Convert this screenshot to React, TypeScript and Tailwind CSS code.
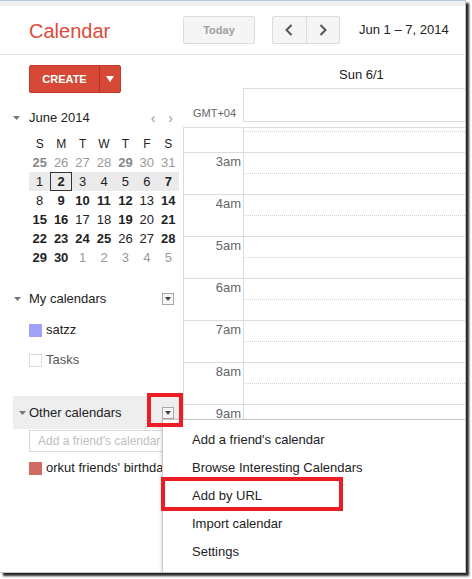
import React from "react";

type Day = { n: number; bold?: boolean; muted?: boolean; today?: boolean };

const weeks: Day[][] = [
  [25, 26, 27, 28, 29, 30, 31].map((n) => ({ n, muted: true, bold: n === 25 || n === 29 })),
  [1, 2, 3, 4, 5, 6, 7].map((n) => ({ n, bold: n === 2 || n === 7, today: n === 2 })),
  [8, 9, 10, 11, 12, 13, 14].map((n) => ({ n, bold: ![8, 13].includes(n) })),
  [15, 16, 17, 18, 19, 20, 21].map((n) => ({ n, bold: [15, 16, 19, 21].includes(n) })),
  [22, 23, 24, 25, 26, 27, 28].map((n) => ({ n, bold: [22, 23, 24, 25, 28].includes(n) })),
  [29, 30, 1, 2, 3, 4, 5].map((n, i) => ({ n, bold: i < 2, muted: i >= 2 })),
];

const hours = ["3am", "4am", "5am", "6am", "7am", "8am", "9am", "10am"];

const menuItems = [
  "Add a friend's calendar",
  "Browse Interesting Calendars",
  "Add by URL",
  "Import calendar",
  "Settings",
];

const Caret = () => (
  <svg width="7" height="4" viewBox="0 0 7 4" className="shrink-0">
    <path d="M0 0h7L3.5 4z" fill="#777" />
  </svg>
);

const MenuBox = () => (
  <div className="flex h-[12px] w-[12px] items-center justify-center border border-[#a8a8a8] bg-[#f6f6f6]">
    <svg width="6" height="4" viewBox="0 0 6 4">
      <path d="M0 0h6L3 4z" fill="#444" />
    </svg>
  </div>
);

export default function App() {
  return (
    <div className="h-[579px] w-[472px] overflow-hidden bg-white font-['Liberation_Sans',Arial,sans-serif] text-[13px] text-[#222]">
      <div className="relative flex h-[573px] w-[466px] flex-col overflow-hidden border-r border-b border-[#c4c4c4] bg-white shadow-[3px_3px_2px_rgba(0,0,0,0.85)]">
        <div className="h-[6px] shrink-0 border-t border-[#b9c8dd] bg-[#f1f1f1]" />

        {/* header */}
        <div className="flex h-[49px] shrink-0 items-center border-b border-[#e5e5e5]">
          <div className="w-[183px] pl-[29px] pt-[2px] text-[20px] leading-[24px] text-[#dd4b39]">Calendar</div>
          <div className="flex h-[28px] w-[72px] items-center justify-center rounded-[2px] border border-[#dcdcdc] bg-[#f5f5f5] text-[11px] font-bold text-[#a0a0a0]">
            Today
          </div>
          <div className="ml-[17px] flex h-[28px] w-[68px] rounded-[2px] border border-[#dcdcdc] bg-[#f5f5f5]">
            <div className="flex flex-1 items-center justify-center border-r border-[#dcdcdc]">
              <svg width="8" height="12" viewBox="0 0 8 12">
                <path d="M6.5 1L1.5 6l5 5" fill="none" stroke="#555" strokeWidth="2" />
              </svg>
            </div>
            <div className="flex flex-1 items-center justify-center">
              <svg width="8" height="12" viewBox="0 0 8 12">
                <path d="M1.5 1l5 5-5 5" fill="none" stroke="#555" strokeWidth="2" />
              </svg>
            </div>
          </div>
          <div className="ml-[19px] whitespace-nowrap">Jun 1 – 7, 2014</div>
        </div>

        <div className="flex flex-1">
          {/* sidebar */}
          <div className="flex w-[183px] shrink-0 flex-col">
            <div className="ml-[29px] mt-[10px] flex h-[28px] w-[92px] rounded-[2px] border border-[#c53727] bg-[#d64937] text-white">
              <div className="flex w-[70px] items-center justify-center border-r border-[#b8301f] text-[11px] font-bold">CREATE</div>
              <div className="flex flex-1 items-center justify-center">
                <svg width="8" height="6" viewBox="0 0 8 6">
                  <path d="M0 0h8L4 6z" fill="#fff" />
                </svg>
              </div>
            </div>

            <div className="mt-[16px] flex h-[18px] items-center">
              <div className="flex w-[29px] justify-center pl-[4px]">
                <Caret />
              </div>
              <span>June 2014</span>
              <span className="ml-auto mr-[10px] flex gap-[13px] text-[14px] text-[#999]">
                <span>‹</span>
                <span>›</span>
              </span>
            </div>

            <div className="ml-[29px] mt-[7px] w-[150px]">
              <div className="grid h-[19px] grid-cols-7 items-center text-center text-[12px]">
                {["S", "M", "T", "W", "T", "F", "S"].map((d, i) => (
                  <span key={i}>{d}</span>
                ))}
              </div>
              {weeks.map((w, wi) => (
                <div key={wi} className={`grid h-[19px] grid-cols-7 items-center text-center ${wi === 1 ? "bg-[#ebebeb]" : ""}`}>
                  {w.map((d, di) => (
                    <span
                      key={di}
                      className={`flex h-[19px] items-center justify-center ${d.bold ? "font-bold" : ""} ${d.muted ? (d.bold ? "text-[#888]" : "text-[#999]") : "text-[#222]"} ${d.today ? "border border-[#333]" : ""}`}
                    >
                      {d.n}
                    </span>
                  ))}
                </div>
              ))}
            </div>

            <div className="mt-[20px] flex h-[24px] items-center pr-[9px]">
              <div className="flex w-[29px] justify-center pl-[6px]">
                <Caret />
              </div>
              <span>My calendars</span>
              <div className="ml-auto">
                <MenuBox />
              </div>
            </div>
            <div className="mt-[4px] flex h-[30px] items-center pl-[29px]">
              <span className="mr-[4px] h-[13px] w-[13px] bg-[#a0a1f7]" />
              <span>satzz</span>
            </div>
            <div className="flex h-[30px] items-center pl-[29px] text-[#555]">
              <span className="mr-[4px] h-[13px] w-[13px] border border-[#dcdcdc]" />
              <span>Tasks</span>
            </div>

            <div className="ml-[13px] mt-[21px] flex h-[33px] items-center bg-[#eeeeee] pr-[9px]">
              <div className="flex w-[16px] justify-center pl-[2px]">
                <Caret />
              </div>
              <span>Other calendars</span>
              <div className="ml-auto">
                <MenuBox />
              </div>
            </div>
            <div className="ml-[29px] mt-[1px] flex h-[22px] w-[150px] items-center overflow-hidden border border-[#d9d9d9] pl-[8px] text-[12px] whitespace-nowrap text-[#c0c0c0]">
              <span className="w-[124px] overflow-hidden">Add a friend's calendar</span>
            </div>
            <div className="mt-[4px] flex h-[24px] w-[162px] items-center overflow-hidden whitespace-nowrap pl-[29px]">
              <span className="mr-[4px] h-[13px] w-[13px] shrink-0 bg-[#d06b64]" />
              <span>orkut friends' birthdays</span>
            </div>
          </div>

          {/* main */}
          <div className="flex flex-1 flex-col">
            <div className="flex h-[33px] items-center pl-[156px] pt-[7px]">Sun 6/1</div>
            <div className="flex h-[34px]">
              <div className="flex w-[60px] items-end pb-[1px] pl-[10px] text-[11px] text-[#666]">GMT+04</div>
              <div className="flex-1 border-t border-b border-l border-[#dddddd]" />
            </div>
            <div className="mt-[5px] flex-1 border-t border-l border-[#dddddd]">
              <div className="flex h-[24px]">
                <div className="w-[59px]" />
                <div className="flex-1 border-l border-[#dddddd]">
                  <div className="h-[4px] border-b border-dotted border-[#d0d0d0]" />
                </div>
              </div>
              {hours.map((h) => (
                <div key={h} className="flex h-[42px] border-t border-[#dddddd]">
                  <div className="w-[59px] pr-[2px] pt-[1px] text-right leading-[15px] text-[#666]">{h}</div>
                  <div className="flex-1 border-l border-[#dddddd]">
                    <div className="h-[21px] border-b border-dotted border-[#d0d0d0]" />
                  </div>
                </div>
              ))}
            </div>
          </div>
        </div>

        {/* dropdown menu */}
        <div className="absolute left-[162px] top-[419px] h-[154px] w-[304px] border border-[#c8c8c8] bg-white pt-[6px] shadow-[0_2px_4px_rgba(0,0,0,0.2)]">
          {menuItems.map((m) => (
            <div key={m} className="flex h-[28px] items-center pl-[29px] whitespace-nowrap">
              {m}
            </div>
          ))}
        </div>

        {/* highlight boxes */}
        <div className="absolute left-[147px] top-[393px] h-[34px] w-[36px] border-4 border-[#ee1c25]" />
        <div className="absolute left-[161px] top-[477px] h-[34px] w-[182px] border-4 border-[#ee1c25]" />
      </div>
    </div>
  );
}
